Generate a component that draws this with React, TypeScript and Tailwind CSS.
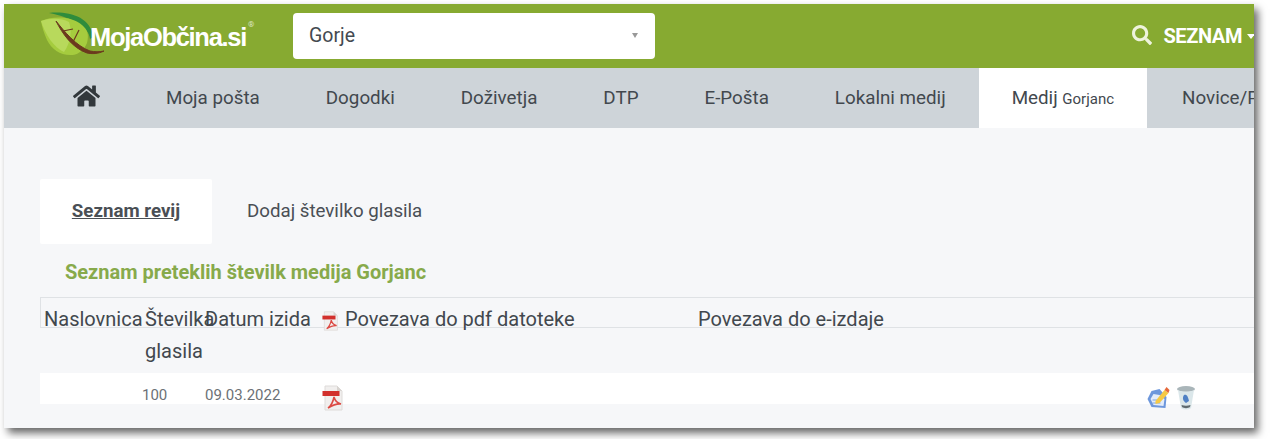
import React from "react";
import { FaHome, FaSearch } from "react-icons/fa";

const PdfIcon = ({ className }: { className: string }) => (
  <svg viewBox="0 0 22 26" className={className}>
    <path d="M3 1h12l5 5v19H3z" fill="#f1efee" stroke="#dedbd9" strokeWidth="1" />
    <path d="M15 1v5h5z" fill="#d8d4d0" />
    <rect x="0.5" y="6" width="17" height="5" fill="#d2302c" />
    <path d="M6 23c3-2 5-6 6-11 1 4 3 6 7 7-4-.5-8 1-13 4z" fill="none" stroke="#dc4a44" strokeWidth="1.600" />
  </svg>
);

const EditIcon = () => (
  <svg viewBox="0 0 24 26" className="w-[25px] h-[26px]">
    <path d="M1 14l4-8 8-2 7 8-1 11-14-1z" fill="#6d97dc" />
    <path d="M4 14l3-5 6 1 5 4-1 7-10-1z" fill="#e3ecfa" />
    <path d="M6 15h7M6 18h8" stroke="#7da3e0" strokeWidth="1" />
    <path d="M9 16L18 5l4 3-9 10-4 1z" fill="#f6c945" />
    <path d="M18 5l2-3 3 3-1 3z" fill="#e5683a" />
  </svg>
);

const BinIcon = () => (
  <svg viewBox="0 0 22 26" className="w-[22px] h-[26px]">
    <ellipse cx="11" cy="4" rx="9" ry="3" fill="#a9b5b9" />
    <path d="M3 5l3 18c2 2 8 2 10 0l3-18c-3 2-13 2-16 0z" fill="#dbe7ea" />
    <path d="M9 10c3-1 4 2 5 6l-3 2c-3-2-4-5-2-8z" fill="#4f80c4" />
    <path d="M7 22c2 1.500 6 1.500 8 0l.5-2c-3 1-6 1-9 0z" fill="#5e6a6e" />
  </svg>
);

const Leaf = () => (
  <svg viewBox="0 0 72 46" className="w-[72px] h-[46px] shrink-0 -mt-[2px]">
    <path d="M9 1c18-2 42 3 44 24l-3 2C49 14 30 5 9 1z" fill="#2f8c3c" />
    <path d="M1 9c14-6 32-4 41 4 6 5 7 10 5 18-3 7-8 11-14 12C21 44 12 38 7 28 4 21 2 15 1 9z" fill="#a5cc3e" />
    <path d="M1 9c10-3 20-3 28 1 3 8 2 20-5 30C14 36 5 22 1 9z" fill="#b8d95c" />
    <path d="M16 9c8 10 20 25 34 30 5 1 9 1 14 0-6 3-12 3-17 2C32 36 22 21 16 9z" fill="#6b3a1e" stroke="#6b3a1e" strokeWidth="1" />
    <path d="M23 19l10-2M33 30l6-12" stroke="#6b3a1e" strokeWidth="1.200" fill="none" />
  </svg>
);

const navItems = ["Moja pošta", "Dogodki", "Doživetja", "DTP", "E-Pošta", "Lokalni medij"];

export default function App() {
  return (
    <div className="w-[1270px] h-[439px] bg-white overflow-hidden pt-[4px] pl-[4px] font-['Roboto',sans-serif]">
      <div className="w-[1250px] h-[424px] bg-[#f6f7f9] overflow-hidden flex flex-col shadow-[4px_5px_8px_rgba(0,0,0,0.6)]">
        <header className="h-[64px] shrink-0 bg-[#87aa31] flex items-center">
          <div className="ml-[36px] w-[253px] flex items-center">
            <Leaf />
            <span className="-ml-[22px] mt-[3px] text-[25.500px] font-bold tracking-[-1.3px] text-white font-['Liberation_Sans',sans-serif] whitespace-nowrap">MojaObčina.si</span>
            <span className="mb-[22px] ml-[2px] text-[8px] text-[#dfe8c8]">®</span>
          </div>
          <div className="w-[362px] h-[46px] -mt-[1px] bg-white rounded-[4px] flex items-center justify-between pl-[16px] pr-[17px] text-[19.500px] text-[#444a50]">
            <span>Gorje</span>
            <span className="w-0 h-0 border-x-[3.500px] border-x-transparent border-t-[5px] border-t-[#999]" />
          </div>
          <div className="ml-auto -mr-[1px] flex items-center shrink-0 text-white font-bold whitespace-nowrap">
            <FaSearch className="w-[20px] h-[20px] text-[#eef3dc] -mt-[2px]" />
            <span className="ml-[11px] text-[20px] tracking-[-0.4px]">SEZNAM</span>
            <span className="ml-[5px] w-0 h-0 border-x-[4px] border-x-transparent border-t-[5px] border-t-white" />
          </div>
        </header>
        <nav className="h-[60px] shrink-0 bg-[#ced4d9] flex items-stretch pl-[36px] text-[18.800px] text-[#42484e] whitespace-nowrap overflow-hidden">
          <a className="px-[33px] flex items-center pb-[5px] text-[#32383c]"><FaHome className="w-[27px] h-[24px]" /></a>
          {navItems.map((n) => (
            <a key={n} className="px-[33px] flex items-center">{n}</a>
          ))}
          <a className="px-[33px] flex items-center bg-white">
            <span>Medij <span className="text-[15px]">Gorjanc</span></span>
          </a>
          <a className="px-[35px] flex items-center">Novice/P</a>
        </nav>
        <main className="pl-[36px] pt-[51px] flex flex-col">
          <div className="flex items-stretch h-[65px] text-[18.700px] text-[#4a4f55]">
            <a className="w-[172px] bg-white rounded-[2px] flex items-center justify-center font-bold underline">Seznam revij</a>
            <a className="ml-[35px] flex items-center">Dodaj številko glasila</a>
          </div>
          <h2 className="mt-[16px] ml-[25px] h-[24px] text-[20px] leading-[24px] font-bold text-[#87aa4b]">Seznam preteklih številk medija Gorjanc</h2>
          <div className="mt-[13px] h-[31px] border-y border-l border-[#dfe2e5] pl-[3px] pt-[5px] text-[20px] leading-[32px] text-[#42484e] flex">
            <span className="w-[101px] shrink-0">Naslovnica</span>
            <span className="w-[60px] shrink-0">Številka glasila</span>
            <span className="w-[117px] shrink-0 whitespace-nowrap">Datum izida</span>
            <PdfIcon className="w-[17px] h-[20px] mt-[8px] mr-[6px] shrink-0" />
            <span className="w-[353px] shrink-0">Povezava do pdf datoteke</span>
            <span>Povezava do e-izdaje</span>
          </div>
          <div className="mt-[45px] h-[31px] bg-white flex items-center text-[15px] text-[#6c7176]">
            <span className="ml-[102px] w-[63px] mt-[14px]">100</span>
            <span className="w-[117px] mt-[14px]">09.03.2022</span>
            <PdfIcon className="w-[22px] h-[26px] mt-[18px]" />
            <span className="ml-auto mr-[57px] flex items-center gap-[4px] mt-[18px]"><EditIcon /><BinIcon /></span>
          </div>
        </main>
      </div>
    </div>
  );
}
